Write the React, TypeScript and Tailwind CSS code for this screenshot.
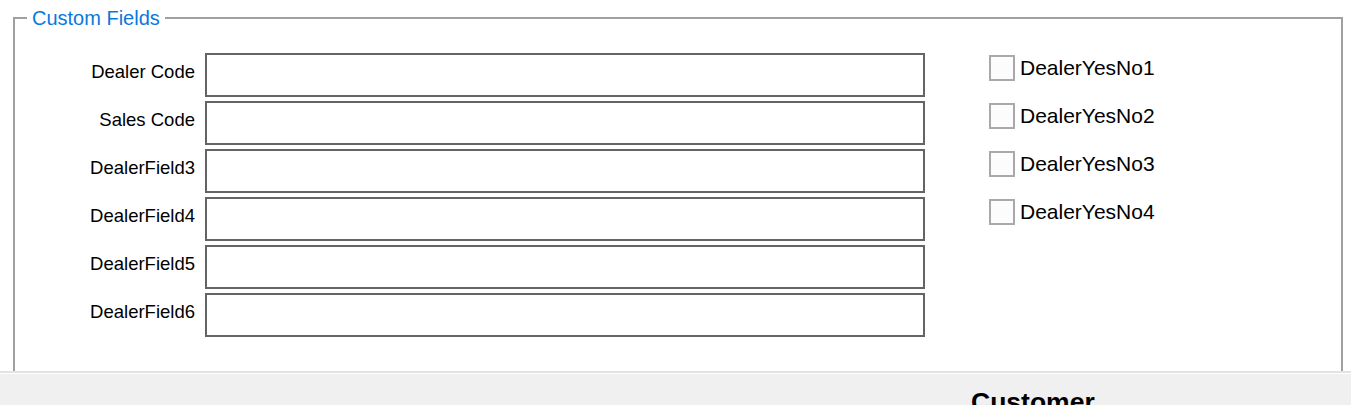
import React from "react";

const fields = ["Dealer Code", "Sales Code", "DealerField3", "DealerField4", "DealerField5", "DealerField6"];
const checks = ["DealerYesNo1", "DealerYesNo2", "DealerYesNo3", "DealerYesNo4"];

export default function App() {
  return (
    <div
      className="w-[1351px] h-[405px] bg-white overflow-hidden flex flex-col"
      style={{ fontFamily: '"Liberation Sans", Arial, sans-serif' }}
    >
      <div className="h-[371px] shrink-0 pl-[13px] pt-[17px]">
        <div className="relative w-[1330px] h-[354px] border-2 border-b-0 border-[#a0a0a0]">
          <div className="absolute -top-[11px] left-[12px] px-[5px] bg-white text-[20px] leading-[20px] text-[#0a78dc]">
            Custom Fields
          </div>
          <div className="flex">
            <div className="flex flex-col gap-[4px] pt-[34px]">
              {fields.map((f) => (
                <div key={f} className="flex items-center gap-[10px] h-[44px]">
                  <div className="w-[180px] text-right text-[18.5px] leading-[20px] text-black pb-[6px]">{f}</div>
                  <div className="w-[720px] h-[44px] border-2 border-[#646464] bg-white" />
                </div>
              ))}
            </div>
            <div className="flex flex-col gap-[22px] pt-[36px] ml-[64px]">
              {checks.map((c) => (
                <div key={c} className="flex items-center h-[26px]">
                  <div className="w-[26px] h-[26px] border-2 border-[#a9a9a9] bg-[#fcfcfc]" />
                  <span className="ml-[5px] text-[21px] leading-[22px] text-black">{c}</span>
                </div>
              ))}
            </div>
          </div>
        </div>
      </div>
      <div className="flex-1 border-t-2 border-[#e3e3e3]">
        <div className="h-full border-t border-white bg-[#f0f0f0] pt-[16px] pl-[971px]">
          <span className="font-bold text-[26.5px] leading-[25px] text-black">Customer</span>
        </div>
      </div>
    </div>
  );
}
